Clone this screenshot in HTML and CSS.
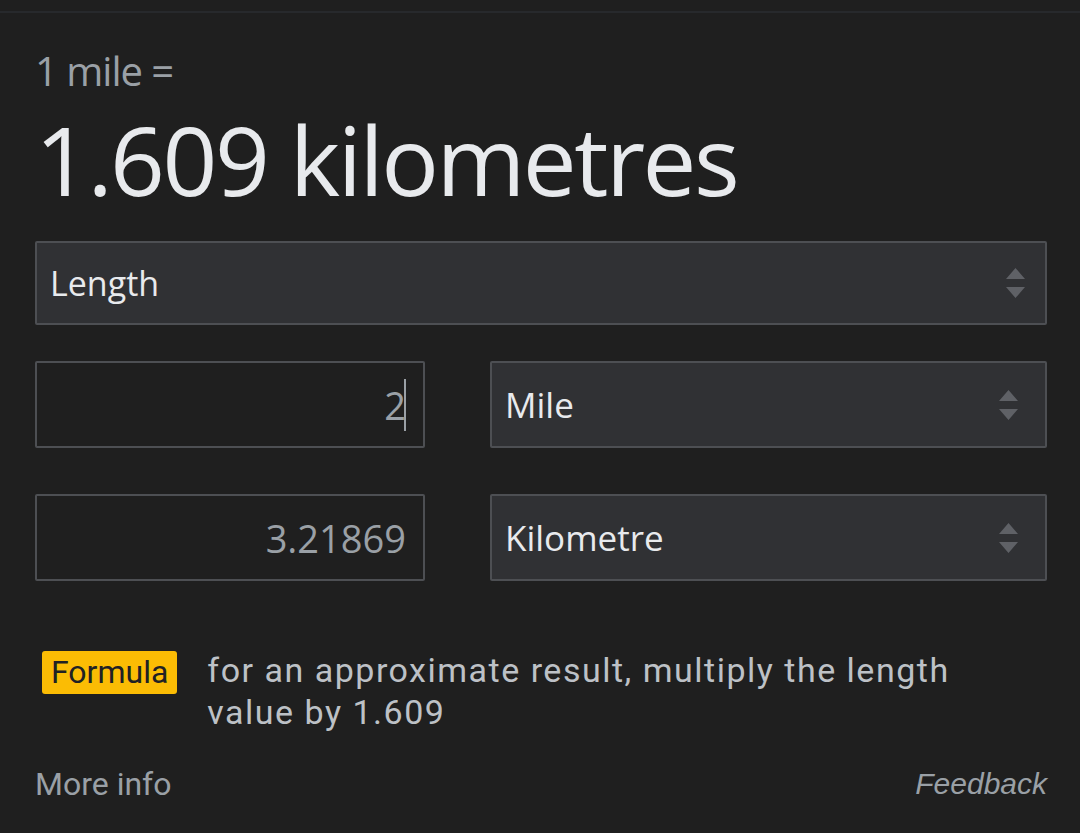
FILE: index.html
```html
<!DOCTYPE html>
<html>
<head>
<meta charset="utf-8">
<link rel="stylesheet" href="styles.css">
</head>
<body>
<div class="topline"></div>
<div class="card">
  <div class="eq">1 mile =</div>
  <div class="result">1.609 kilometres</div>
  <div class="select wide">
    <span class="label">Length</span>
    <svg class="arrows" width="19" height="30" viewBox="0 0 19 30"><path d="M9.5 0 L19 11 L0 11 Z M0 19 L19 19 L9.5 30 Z" fill="#5f6166"/></svg>
  </div>
  <div class="row">
    <div class="input"><span class="val">2</span><span class="caret"></span></div>
    <div class="select">
      <span class="label">Mile</span>
      <svg class="arrows" width="19" height="30" viewBox="0 0 19 30"><path d="M9.5 0 L19 11 L0 11 Z M0 19 L19 19 L9.5 30 Z" fill="#5f6166"/></svg>
    </div>
  </div>
  <div class="row">
    <div class="input"><span class="val">3.21869</span></div>
    <div class="select">
      <span class="label">Kilometre</span>
      <svg class="arrows" width="19" height="30" viewBox="0 0 19 30"><path d="M9.5 0 L19 11 L0 11 Z M0 19 L19 19 L9.5 30 Z" fill="#5f6166"/></svg>
    </div>
  </div>
  <div class="formula">
    <span class="badge">Formula</span>
    <span class="ftext">for an approximate result, multiply the length value by 1.609</span>
  </div>
  <div class="footer">
    <span class="more">More info</span>
    <span class="feedback">Feedback</span>
  </div>
</div>
</body>
</html>
```
FILE: styles.css
```css
html, body {
  margin: 0;
  padding: 0;
  background: #1f1f1f;
  height: 833px;
  overflow: hidden;
}
.topline {
  height: 2px;
  margin-top: 11px;
  background: #27292c;
}
.card {
  padding: 0 33px 0 35px;
  font-family: "Open Sans", "Roboto", sans-serif;
}
.eq {
  margin-top: 31px;
  font-size: 40px;
  line-height: 54px;
  color: #9aa0a6;
  letter-spacing: -1px;
}
.result {
  margin-top: 5px;
  font-size: 96px;
  line-height: 112px;
  color: #e8eaed;
  letter-spacing: -2.5px;
}
.select {
  display: flex;
  align-items: center;
  justify-content: space-between;
  box-sizing: border-box;
  background: #303134;
  border: 2px solid #4d4f53;
  border-radius: 2px;
  color: #e8eaed;
  font-size: 34px;
  padding: 0 20px 0 13px;
}
.select.wide {
  margin-top: 26px;
  height: 84px;
}
.row {
  display: flex;
  gap: 65px;
  margin-top: 36px;
}
.row + .row {
  margin-top: 46px;
}
.input {
  box-sizing: border-box;
  width: 390px;
  height: 87px;
  border: 2px solid #4d4f53;
  border-radius: 2px;
  display: flex;
  align-items: center;
  justify-content: flex-end;
  padding-right: 17px;
  font-size: 38px;
  color: #9aa0a6;
}
.row .select {
  flex: 1;
  height: 87px;
  font-size: 35px;
  padding-right: 27px;
}
.caret {
  display: inline-block;
  width: 2px;
  height: 52px;
  background: #9aa0a6;
  margin-left: -2px;
}
.formula {
  display: flex;
  align-items: flex-start;
  gap: 30px;
  margin-top: 70px;
  padding-left: 7px;
  font-family: "Roboto", sans-serif;
}
.badge {
  background: #fbbc04;
  color: #202124;
  font-size: 32px;
  line-height: 43px;
  padding: 0 9px 0 9px;
  border-radius: 3px;
  flex: none;
}
.ftext {
  font-size: 34px;
  line-height: 42px;
  letter-spacing: 1.5px;
  color: #bdc1c6;
  width: 800px;
  margin-top: -2px;
}
.footer {
  display: flex;
  justify-content: space-between;
  align-items: center;
  margin-top: 32px;
  font-size: 30px;
  color: #9aa0a6;
}
.more {
  font-family: "Roboto", sans-serif;
  font-size: 32px;
}
.feedback {
  font-family: "Liberation Sans", Arial, sans-serif;
  font-style: italic;
}
```
